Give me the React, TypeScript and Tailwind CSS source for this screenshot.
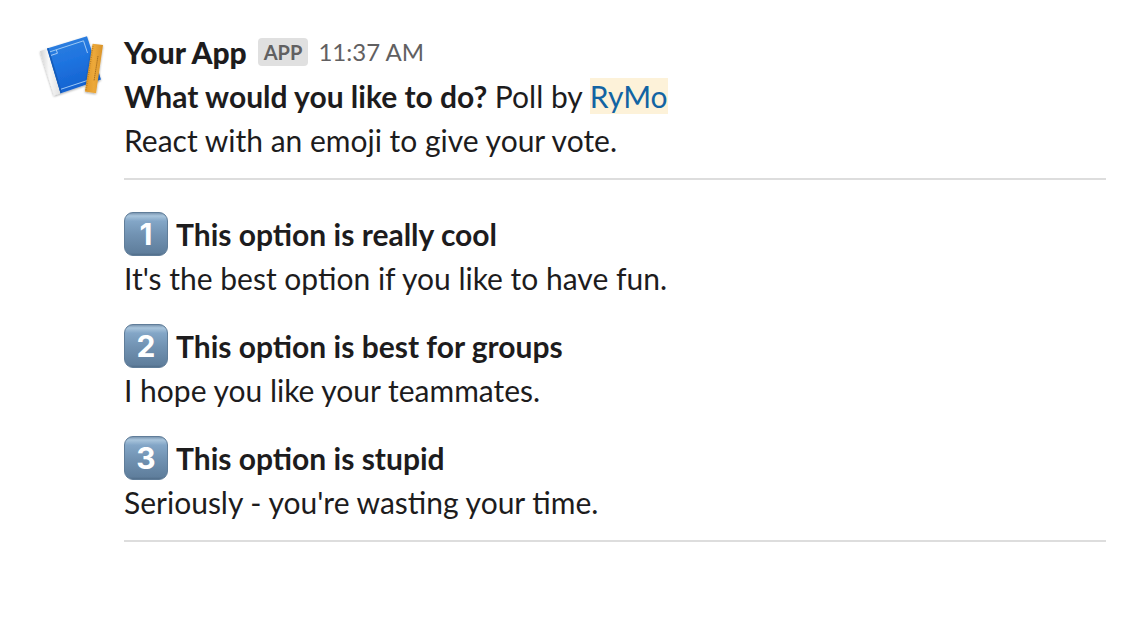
const options = [
  { digit: "1", title: "This option is really cool", detail: "It's the best option if you like to have fun." },
  { digit: "2", title: "This option is best for groups", detail: "I hope you like your teammates." },
  { digit: "3", title: "This option is stupid", detail: "Seriously - you're wasting your time." },
];

function AppIcon() {
  return (
    <svg viewBox="0 0 84 80" className="h-20 w-[84px] shrink-0" role="img" aria-label="Your App">
      <defs>
        <linearGradient id="cover" x1="0" y1="0" x2="0.3" y2="1">
          <stop offset="0" stopColor="#3283de" />
          <stop offset="0.5" stopColor="#1f74e0" />
          <stop offset="1" stopColor="#1462d0" />
        </linearGradient>
        <linearGradient id="spine" x1="0" y1="0.1" x2="1" y2="0">
          <stop offset="0" stopColor="#d2d2d2" />
          <stop offset="0.4" stopColor="#f8f8f8" />
          <stop offset="1" stopColor="#dcdcdc" />
        </linearGradient>
        <linearGradient id="ruler" x1="0" y1="0" x2="1" y2="0">
          <stop offset="0" stopColor="#e0982a" />
          <stop offset="0.5" stopColor="#eda93a" />
          <stop offset="1" stopColor="#d99329" />
        </linearGradient>
        <filter id="drop" x="-20%" y="-20%" width="140%" height="140%">
          <feDropShadow dx="0" dy="1" stdDeviation="0.9" floodColor="#000" floodOpacity="0.35" />
        </filter>
      </defs>
      <g filter="url(#drop)">
        <path d="M17 22.5 L57 10.2 L71 53.5 L30 67.5 Z" fill="url(#cover)" />
        <path d="M10 25.2 L17 22.8 L30.5 67.2 L24 69.6 Z" fill="url(#spine)" />
        <path d="M17 22.6 L18.6 22.1 L32 66.4 L30.5 67.2 Z" fill="#145bb8" />
      </g>
      <path d="M20 25.8 L53.5 14.8 L57.5 27 M31 63.2 L57 54.6" fill="none" stroke="#9cc8f5" strokeWidth="1" />
      <path d="M21 29.4 L27.4 27.3 L26.4 23.9" fill="none" stroke="#b4d5f8" strokeWidth="0.9" />
      <g filter="url(#drop)">
        <path d="M62.6 17.8 L73 19 L66 67.2 L54.9 65.6 Z" fill="url(#ruler)" />
      </g>
      <path d="M63 20 L56 64" stroke="#b47a22" strokeWidth="1.6" strokeDasharray="0.7 1.5" fill="none" />
      <path d="M68 30 L64 55" stroke="#98621a" strokeWidth="0.8" strokeDasharray="1.5 0.6" fill="none" />
    </svg>
  );
}

function Keycap({ digit }: { digit: string }) {
  return (
    <svg viewBox="0 0 44 44" className="size-11 shrink-0" role="img" aria-label={digit}>
      <defs>
        <linearGradient id={`key${digit}`} x1="0" y1="0" x2="0" y2="1">
          <stop offset="0" stopColor="#7590ab" />
          <stop offset="0.08" stopColor="#a9c5dc" />
          <stop offset="0.2" stopColor="#83a6c7" />
          <stop offset="0.5" stopColor="#7293b3" />
          <stop offset="0.94" stopColor="#5f7e9c" />
          <stop offset="1" stopColor="#4d6984" />
        </linearGradient>
      </defs>
      <rect x="0.5" y="0.5" width="43" height="43" rx="8.5" fill={`url(#key${digit})`} stroke="#607d99" />
      <text
        x="22"
        y="33"
        textAnchor="middle"
        className="fill-white font-[Inter,sans-serif] text-[30px] font-bold"
      >
        {digit}
      </text>
    </svg>
  );
}

export default function App() {
  return (
    <main className="min-h-screen bg-white font-[Lato,sans-serif] text-[30px] leading-[44px] text-[#1d1c1d]">
      <article className="flex pt-[30px] pr-[34px] pb-8 pl-[30px]">
        <div className="-mt-1 mr-[10px] shrink-0">
          <AppIcon />
        </div>
        <div className="min-w-0 flex-1">
          <header className="flex items-center">
            <h1 className="font-black">Your App</h1>
            <span className="ml-[11px] rounded-[4px] bg-[#e0e0e0] px-[6px] text-[20px] leading-7 font-bold text-[#616061]">
              APP
            </span>
            <time className="ml-[10px] text-[24px] text-[#616061]">11:37 AM</time>
          </header>
          <p>
            <strong className="font-bold">What would you like to do?</strong> Poll by{" "}
            <a href="#rymo" className="bg-[#fdf2d9] text-[#1264a3]">
              RyMo
            </a>
          </p>
          <p>React with an emoji to give your vote.</p>
          <hr className="mt-4 border-t-2 border-[#dddddd]" />
          <ul className="mt-8 flex flex-col gap-6">
            {options.map((option) => (
              <li key={option.digit}>
                <h2 className="flex items-center gap-2 font-bold">
                  <Keycap digit={option.digit} />
                  {option.title}
                </h2>
                <p>{option.detail}</p>
              </li>
            ))}
          </ul>
          <hr className="mt-4 border-t-2 border-[#dddddd]" />
        </div>
      </article>
    </main>
  );
}
